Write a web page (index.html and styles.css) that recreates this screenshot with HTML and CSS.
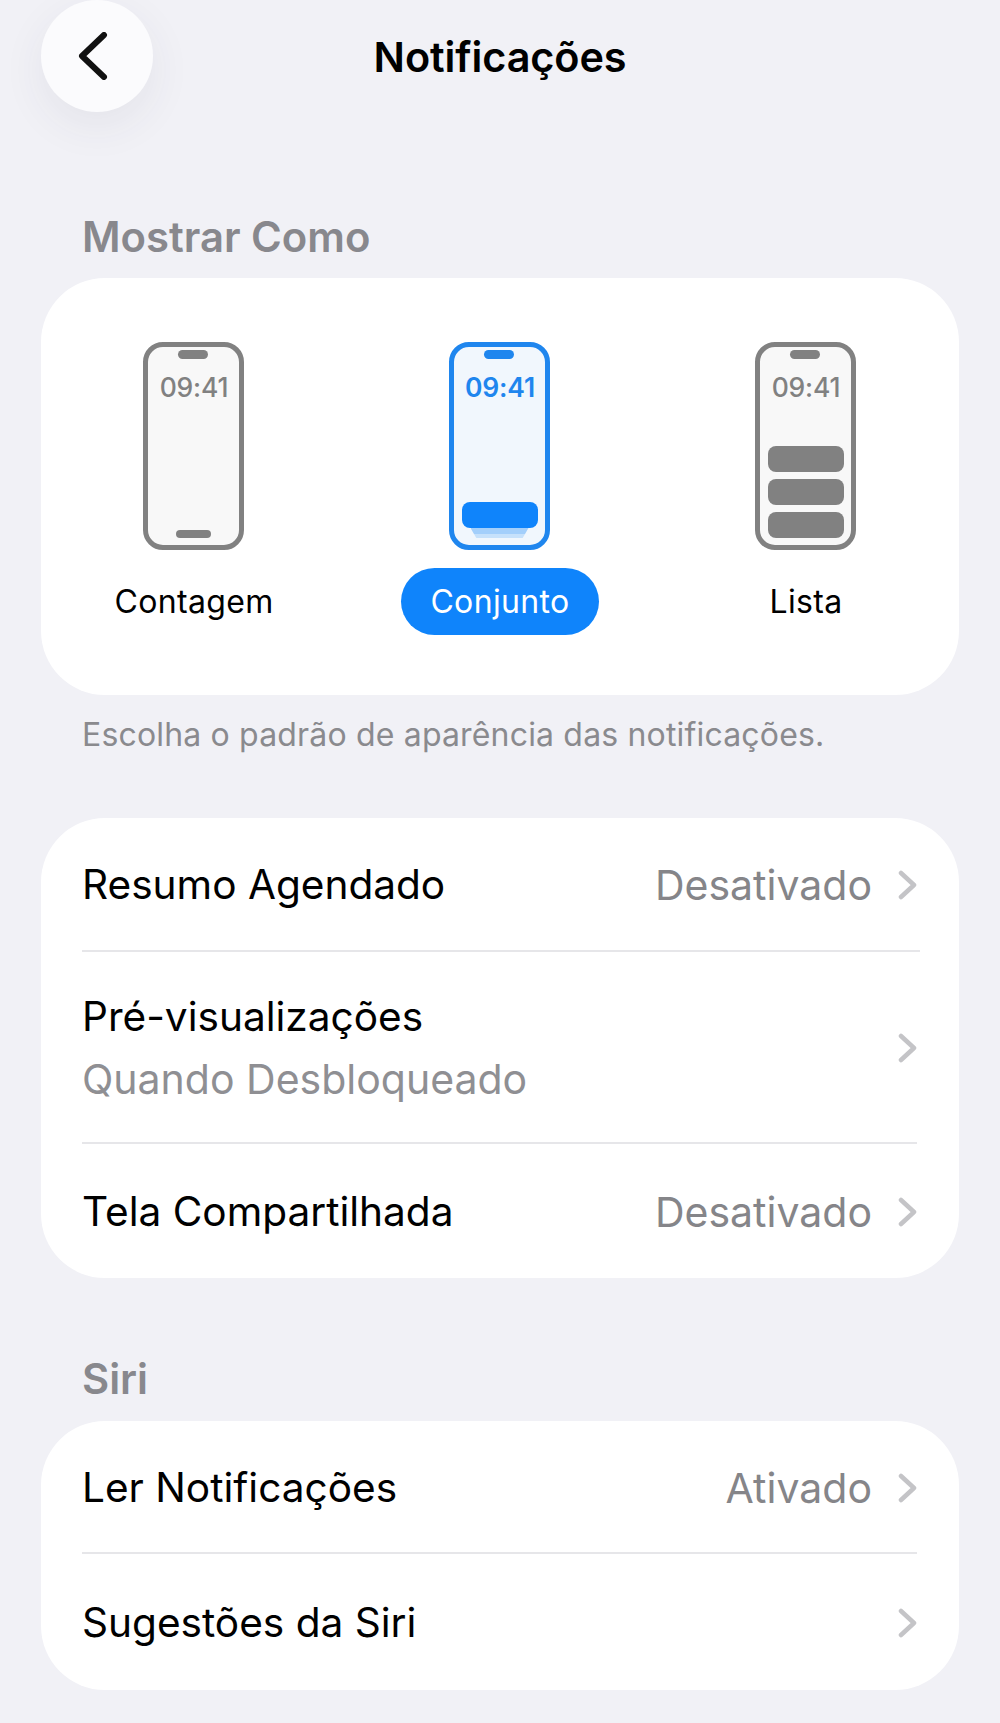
FILE: index.html
```html
<!DOCTYPE html>
<html lang="pt-BR">
<head>
<meta charset="utf-8">
<title>Notificações</title>
<link rel="stylesheet" href="styles.css">
</head>
<body>
<div class="page">
  <header class="nav">
    <button class="back" aria-label="Voltar">
      <svg class="back-icon" viewBox="0 0 30 48"><path d="M26 3 L4 24 L26 45" /></svg>
    </button>
    <h1 class="title">Notificações</h1>
  </header>

  <h2 class="section-head head-first">Mostrar Como</h2>
  <section class="card card-modes">
    <div class="mode">
      <div class="phone">
        <span class="notch"></span>
        <span class="time">09:41</span>
        <span class="home"></span>
      </div>
      <span class="mode-label">Contagem</span>
    </div>
    <div class="mode mode-active">
      <div class="phone">
        <span class="notch"></span>
        <span class="time">09:41</span>
        <div class="stack">
          <span class="stack-top"></span>
          <span class="stack-under"></span>
        </div>
      </div>
      <span class="mode-label">Conjunto</span>
    </div>
    <div class="mode">
      <div class="phone">
        <span class="notch"></span>
        <span class="time">09:41</span>
        <div class="list">
          <span class="list-item"></span>
          <span class="list-item"></span>
          <span class="list-item"></span>
        </div>
      </div>
      <span class="mode-label">Lista</span>
    </div>
  </section>
  <p class="caption">Escolha o padrão de aparência das notificações.</p>

  <section class="card">
    <div class="row row-a">
      <span class="row-label">Resumo Agendado</span>
      <span class="row-value">Desativado</span>
      <svg class="chev" viewBox="0 0 19 30"><path d="M3 3 L16 15 L3 27" /></svg>
    </div>
    <div class="row row-b">
      <div class="row-text">
        <span class="row-label">Pré-visualizações</span>
        <span class="row-sub">Quando Desbloqueado</span>
      </div>
      <svg class="chev" viewBox="0 0 19 30"><path d="M3 3 L16 15 L3 27" /></svg>
    </div>
    <div class="row row-c">
      <span class="row-label">Tela Compartilhada</span>
      <span class="row-value">Desativado</span>
      <svg class="chev" viewBox="0 0 19 30"><path d="M3 3 L16 15 L3 27" /></svg>
    </div>
  </section>

  <h2 class="section-head head-siri">Siri</h2>
  <section class="card">
    <div class="row row-d">
      <span class="row-label">Ler Notificações</span>
      <span class="row-value">Ativado</span>
      <svg class="chev" viewBox="0 0 19 30"><path d="M3 3 L16 15 L3 27" /></svg>
    </div>
    <div class="row row-e">
      <span class="row-label">Sugestões da Siri</span>
      <svg class="chev" viewBox="0 0 19 30"><path d="M3 3 L16 15 L3 27" /></svg>
    </div>
  </section>
</div>
</body>
</html>
```
FILE: styles.css
```css
* { box-sizing: border-box; }
html, body { margin: 0; padding: 0; }
body {
  background: #f1f1f6;
  font-family: Inter, "Liberation Sans", sans-serif;
  color: #000;
  height: 1723px;
  overflow: hidden;
}
.page { padding: 0 41px; }

.nav {
  display: grid;
  grid-template-columns: 1fr auto 1fr;
  grid-template-rows: 112px;
  height: 112px;
}
.back {
  grid-column: 1;
  grid-row: 1;
  width: 112px;
  height: 112px;
  padding: 0;
  border: 0;
  border-radius: 50%;
  background: #fbfbfd;
  box-shadow: 0 14px 44px rgba(60, 60, 80, 0.07);
  display: flex;
  align-items: center;
  justify-content: center;
}
.back-icon { width: 30px; height: 48px; margin-left: -8px; }
.back-icon path {
  fill: none;
  stroke: #111;
  stroke-width: 6;
  stroke-linecap: round;
  stroke-linejoin: round;
}
.title {
  grid-column: 2;
  grid-row: 1;
  margin: 0;
  padding-top: 1px;
  font-size: 41.4px;
  font-weight: 600;
  line-height: 112px;
  letter-spacing: -0.1px;
}

.section-head {
  margin: 0;
  padding-left: 41px;
  font-size: 41.8px;
  font-weight: 600;
  line-height: 48px;
  color: #88888d;
}
.head-first { margin-top: 101px; padding-bottom: 17px; }
.head-siri { margin-top: 77px; padding-bottom: 18px; }

.card {
  background: #fff;
  border-radius: 64px;
  overflow: hidden;
}
.card-modes {
  display: grid;
  grid-template-columns: repeat(3, 306px);
  justify-content: center;
  height: 417px;
  padding: 64px 2px 0 0;
}

.mode {
  display: flex;
  flex-direction: column;
  align-items: center;
}
.phone {
  width: 101px;
  height: 208px;
  border: 5px solid #818181;
  border-radius: 20px;
  background: #f8f8f8;
  display: flex;
  flex-direction: column;
  align-items: center;
  padding: 3px 0 7px;
}
.notch {
  width: 30px;
  height: 9px;
  border-radius: 5px;
  background: #818181;
}
.time {
  margin: 12px 0 0 2px;
  font-size: 26.5px;
  font-weight: 500;
  line-height: 32px;
  letter-spacing: -0.2px;
  color: #818181;
}
.home {
  width: 35px;
  height: 8px;
  border-radius: 4px;
  background: #818181;
  margin-top: auto;
}
.list {
  margin: auto 0 0 1px;
  display: flex;
  flex-direction: column;
  gap: 7px;
}
.list-item {
  width: 76px;
  height: 26px;
  border-radius: 8px;
  background: #818181;
}
.stack {
  margin: auto 0 0 1px;
  display: flex;
  flex-direction: column;
  align-items: center;
}
.stack-top {
  width: 76px;
  height: 26px;
  border-radius: 8px;
  background: #0f84fb;
}
.stack-under {
  width: 58px;
  height: 10px;
  clip-path: polygon(0 0, 100% 0, 90% 100%, 10% 100%);
  background: linear-gradient(#a3cffb 0 60%, #c6e1fb 60% 100%);
}
.mode-active .phone {
  border-color: #1f86ee;
  background: #f1f7fd;
}
.mode-active .notch { background: #1f86ee; }
.mode-active .time { color: #1f86ee; font-weight: 600; }

.mode-label {
  margin: 18px 0 0 2px;
  height: 67px;
  padding: 0 29px;
  border-radius: 34px;
  font-size: 32px;
  line-height: 67px;
  letter-spacing: 0.35px;
}
.mode-active .mode-label {
  background: #0f84fb;
  color: #fff;
}

.caption {
  margin: 0;
  height: 123px;
  padding: 22px 0 0 41px;
  font-size: 32px;
  line-height: 36px;
  letter-spacing: 0.17px;
  color: #8a8a8e;
}

.row {
  display: flex;
  align-items: center;
  margin: 0 42px 0 41px;
  padding-top: 1px;
  border-bottom: 2px solid #e6e6e9;
}
.row:last-child { border-bottom: 0; }
.row-a { height: 134px; margin-right: 39px; padding-right: 3px; }
.row-b { height: 192px; }
.row-c { height: 134px; }
.row-d { height: 133px; padding-top: 3px; }
.row-e { height: 136px; padding-top: 2px; }
.row-label { font-size: 40.6px; line-height: 48px; flex: 1; }
.row-value { font-size: 41px; line-height: 48px; color: #858589; margin-right: 26px; }
.row-text { flex: 1; display: flex; flex-direction: column; gap: 14px; }
.row-sub { font-size: 41px; line-height: 48px; color: #8f8f93; }
.chev { width: 19px; height: 30px; flex: none; }
.chev path {
  fill: none;
  stroke: #c4c4c7;
  stroke-width: 4.5;
  stroke-linecap: round;
  stroke-linejoin: round;
}
```
